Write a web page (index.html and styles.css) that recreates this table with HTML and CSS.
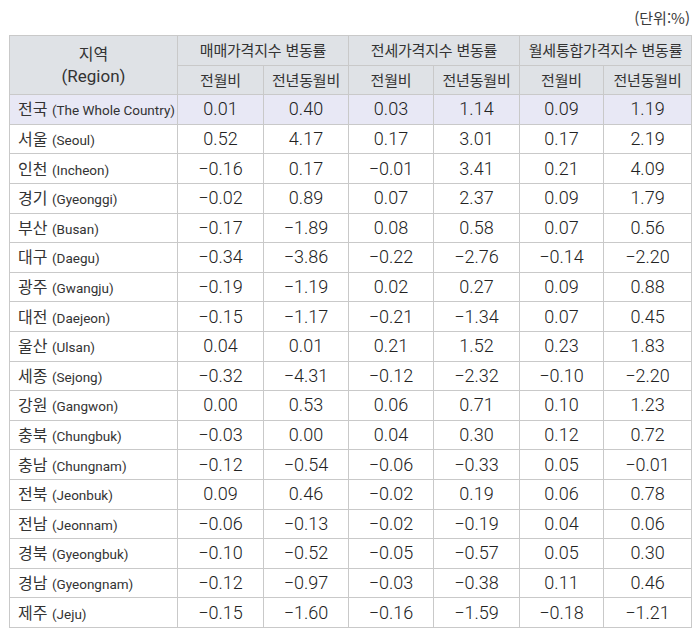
FILE: index.html
```html
<!DOCTYPE html>
<html lang="ko">
<head>
<meta charset="utf-8">
<link rel="stylesheet" href="styles.css">
</head>
<body>
<div class="wrap">
  <div class="unit">(단위:%)</div>
  <table class="tbl">
    <colgroup>
      <col class="c-region">
      <col class="c86"><col class="c85"><col class="c85"><col class="c86"><col class="c84"><col class="c88">
    </colgroup>
    <thead>
      <tr>
        <th rowspan="2" class="region-h"><span class="ln">지역</span><span class="ln">(Region)</span></th>
        <th colspan="2">매매가격지수 변동률</th>
        <th colspan="2">전세가격지수 변동률</th>
        <th colspan="2">월세통합가격지수 변동률</th>
      </tr>
      <tr>
        <th>전월비</th><th>전년동월비</th>
        <th>전월비</th><th>전년동월비</th>
        <th>전월비</th><th>전년동월비</th>
      </tr>
    </thead>
    <tbody>
      <tr class="total"><td class="rg">전국 <span class="en">(The Whole Country)</span></td><td>0.01</td><td>0.40</td><td>0.03</td><td>1.14</td><td>0.09</td><td>1.19</td></tr>
      <tr><td class="rg">서울 <span class="en">(Seoul)</span></td><td>0.52</td><td>4.17</td><td>0.17</td><td>3.01</td><td>0.17</td><td>2.19</td></tr>
      <tr><td class="rg">인천 <span class="en">(Incheon)</span></td><td>−0.16</td><td>0.17</td><td>−0.01</td><td>3.41</td><td>0.21</td><td>4.09</td></tr>
      <tr><td class="rg">경기 <span class="en">(Gyeonggi)</span></td><td>−0.02</td><td>0.89</td><td>0.07</td><td>2.37</td><td>0.09</td><td>1.79</td></tr>
      <tr><td class="rg">부산 <span class="en">(Busan)</span></td><td>−0.17</td><td>−1.89</td><td>0.08</td><td>0.58</td><td>0.07</td><td>0.56</td></tr>
      <tr><td class="rg">대구 <span class="en">(Daegu)</span></td><td>−0.34</td><td>−3.86</td><td>−0.22</td><td>−2.76</td><td>−0.14</td><td>−2.20</td></tr>
      <tr><td class="rg">광주 <span class="en">(Gwangju)</span></td><td>−0.19</td><td>−1.19</td><td>0.02</td><td>0.27</td><td>0.09</td><td>0.88</td></tr>
      <tr><td class="rg">대전 <span class="en">(Daejeon)</span></td><td>−0.15</td><td>−1.17</td><td>−0.21</td><td>−1.34</td><td>0.07</td><td>0.45</td></tr>
      <tr><td class="rg">울산 <span class="en">(Ulsan)</span></td><td>0.04</td><td>0.01</td><td>0.21</td><td>1.52</td><td>0.23</td><td>1.83</td></tr>
      <tr><td class="rg">세종 <span class="en">(Sejong)</span></td><td>−0.32</td><td>−4.31</td><td>−0.12</td><td>−2.32</td><td>−0.10</td><td>−2.20</td></tr>
      <tr><td class="rg">강원 <span class="en">(Gangwon)</span></td><td>0.00</td><td>0.53</td><td>0.06</td><td>0.71</td><td>0.10</td><td>1.23</td></tr>
      <tr><td class="rg">충북 <span class="en">(Chungbuk)</span></td><td>−0.03</td><td>0.00</td><td>0.04</td><td>0.30</td><td>0.12</td><td>0.72</td></tr>
      <tr><td class="rg">충남 <span class="en">(Chungnam)</span></td><td>−0.12</td><td>−0.54</td><td>−0.06</td><td>−0.33</td><td>0.05</td><td>−0.01</td></tr>
      <tr><td class="rg">전북 <span class="en">(Jeonbuk)</span></td><td>0.09</td><td>0.46</td><td>−0.02</td><td>0.19</td><td>0.06</td><td>0.78</td></tr>
      <tr><td class="rg">전남 <span class="en">(Jeonnam)</span></td><td>−0.06</td><td>−0.13</td><td>−0.02</td><td>−0.19</td><td>0.04</td><td>0.06</td></tr>
      <tr><td class="rg">경북 <span class="en">(Gyeongbuk)</span></td><td>−0.10</td><td>−0.52</td><td>−0.05</td><td>−0.57</td><td>0.05</td><td>0.30</td></tr>
      <tr><td class="rg">경남 <span class="en">(Gyeongnam)</span></td><td>−0.12</td><td>−0.97</td><td>−0.03</td><td>−0.38</td><td>0.11</td><td>0.46</td></tr>
      <tr><td class="rg">제주 <span class="en">(Jeju)</span></td><td>−0.15</td><td>−1.60</td><td>−0.16</td><td>−1.59</td><td>−0.18</td><td>−1.21</td></tr>
    </tbody>
  </table>
</div>
</body>
</html>
```
FILE: styles.css
```css
html, body {
  margin: 0;
  padding: 0;
  background: #ffffff;
}
.wrap {
  padding: 8px 9px 0 9px;
  font-family: "Noto Sans CJK KR", "Noto Sans", sans-serif;
  color: #333333;
}
.unit {
  text-align: right;
  font-size: 15px;
  line-height: 19px;
  height: 27px;
  padding-right: 1px;
  color: #3a3a3a;
}
.tbl {
  border-collapse: collapse;
  table-layout: fixed;
  width: 682px;
}
.c-region { width: 168px; }
.c86 { width: 86px; }
.c85 { width: 85px; }
.c84 { width: 84px; }
.c88 { width: 88px; }
.tbl th, .tbl td {
  border: 1px solid #c9c9c9;
  padding: 0;
  text-align: center;
  vertical-align: middle;
}
.tbl tr { height: 29.6px; }
.tbl th {
  background: #dfe2e6;
  font-weight: normal;
  font-size: 15px;
  line-height: 20px;
  letter-spacing: -0.2px;
  color: #333333;
  white-space: nowrap;
}
.tbl th.region-h {
  font-size: 16px;
  line-height: 23px;
  letter-spacing: 0;
}
.tbl th.region-h .ln {
  display: block;
}
.tbl th.region-h .ln + .ln {
  font-family: Roboto, "Liberation Sans", sans-serif;
  font-size: 17px;
  font-weight: 400;
}
.tbl td {
  font-family: Roboto, "Liberation Sans", sans-serif;
  font-size: 18px;
  font-weight: 300;
  line-height: 20px;
  color: #222222;
}
.tbl td.rg {
  text-align: left;
  padding-left: 8px;
  font-family: "Noto Sans CJK KR", sans-serif;
  font-size: 16px;
  font-weight: normal;
  color: #333333;
  white-space: nowrap;
}
.tbl td.rg .en {
  font-family: Roboto, "Liberation Sans", sans-serif;
  font-size: 13.5px;
  font-weight: 400;
}
.tbl tr.total td {
  background: #e8e8f5;
}
```
